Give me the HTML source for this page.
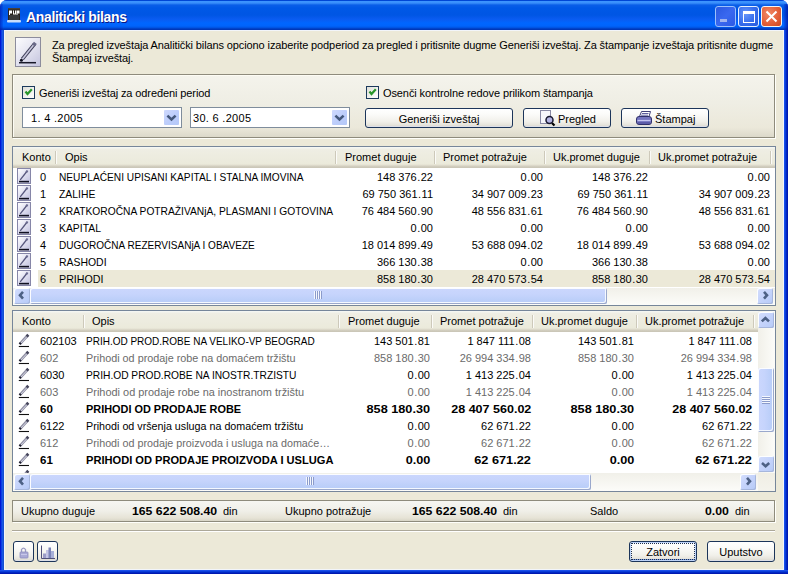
<!DOCTYPE html><html><head><meta charset="utf-8"><style>
*{margin:0;padding:0;box-sizing:border-box}
html,body{width:788px;height:574px;overflow:hidden;background:#fff}
body{font-family:"Liberation Sans",sans-serif;font-size:11px;color:#000;position:relative}
.a{position:absolute}
.t{position:absolute;white-space:nowrap;line-height:13px}
svg{display:block}
.btn{position:absolute;border:1px solid #1c355a;padding-top:1px;border-radius:3px;background:linear-gradient(#ffffff 0%,#fbfbf9 30%,#f1f0ea 70%,#e6e4dc 88%,#d8d5cb 100%);text-align:center;line-height:18px;white-space:nowrap;box-shadow:inset 0 -1px 0 #dcdfe8}
.combo{position:absolute;height:21px;border:1px solid #7f8d9c;background:#fff}
.cbtn{position:absolute;right:2px;top:2px;width:15px;height:15px;border-radius:1px;background:linear-gradient(135deg,#cfd9fd,#bccdfb 55%,#b4c8f8)}
.grid{position:absolute;border:1px solid #76869a;background:#fff;overflow:hidden}
.hdr{position:absolute;left:0;top:0;height:21px;background:linear-gradient(#f4f6f2 0px,#f4f6f2 1px,#efeee4 2px,#ebeadb 17px,#e2dfd0 18px,#d6d2c3 19px,#cbc7b8 20px,#cbc7b8 21px)}
.hs{position:absolute;top:4px;width:2px;height:13px;border-left:1px solid #cdc9ba;border-right:1px solid #fbfbf8}
.c{position:absolute;white-space:nowrap;line-height:13px}
.r{text-align:right}
.g{color:#6b6b6b}
.b{font-weight:bold}
.track{position:absolute;background:linear-gradient(#f1f0e9,#fcfcf9)}
.vtrack{position:absolute;background:linear-gradient(90deg,#f1f0e9,#fcfcf9)}
</style></head><body>
<div class="a" style="left:0;top:0;width:788px;height:574px;border-radius:7px 7px 0 0;overflow:hidden;background:linear-gradient(90deg,#0010d0 0,#0020d8 1px,#1a5ef2 2px,#1650d0 3px,#1650d0 4px,#0831d9 4px)"><div class="a" style="left:0;top:0;width:788px;height:30px;background:linear-gradient(#0046d5 0px,#0046d5 1px,#3d95ff 1px,#3a8ffb 3px,#0a5ee8 5px,#0058e6 8px,#0056e4 15px,#0a5bf0 19px,#0066ff 23px,#0064fc 26px,#0050dd 28px,#0037b8 29px,#0037b8 30px)"></div><div class="a" style="left:784px;top:4px;width:4px;height:26px;background:linear-gradient(90deg,rgba(0,40,200,0.25),rgba(0,30,180,0.55) 2px,rgba(0,20,160,0.8))"></div><div class="a" style="left:0;top:4px;width:3px;height:26px;background:linear-gradient(90deg,rgba(0,20,170,0.6),rgba(0,40,200,0.2))"></div><div class="a" style="left:784px;top:30px;width:4px;height:544px;background:linear-gradient(90deg,#1a50ea 0,#1a50ea 1px,#0a3cd8 1px,#0a3cd8 2px,#0028c4 2px,#0028c4 3px,#0018b0 3px)"></div><div class="a" style="left:0;top:570px;width:788px;height:4px;background:linear-gradient(#1a50ea 0,#1a50ea 1px,#0a3cd8 1px,#0a3cd8 2px,#0028c4 2px,#0028c4 3px,#0018b0 3px)"></div></div>
<div class="a" style="left:4px;top:30px;width:780px;height:540px;background:#ece9d8;box-shadow:inset 0 0 0 1px #f2f5fa"></div>
<svg class="a" style="left:7px;top:8px" width="14" height="15" viewBox="0 0 14 15"><rect x="1" y="0" width="12" height="13" fill="#2a241e"/><rect x="1" y="0" width="12" height="1.5" fill="#4a4038"/><rect x="2" y="7" width="10" height="5" fill="#3a3a3a"/><path d="M2 2.5h3v3h-2v1.5h-1z M6 2.5h1v3h1v-3h1v4h-3z M9.5 2.5h3v3h-2v1.5h-1z" fill="#fff"/><rect x="0" y="12" width="14" height="2.5" rx="1" fill="#c8dcfa"/></svg>
<div class="t" style="left:27px;top:11px;color:#0a1883;font-weight:bold;font-size:14px;line-height:15px;letter-spacing:-0.35px">Analiticki bilans</div>
<div class="t" style="left:26px;top:10px;color:#fff;font-weight:bold;font-size:14px;line-height:15px;letter-spacing:-0.35px">Analiticki bilans</div>
<div class="a" style="left:715px;top:6px;width:21px;height:21px;border:1px solid #9cc0fc;border-radius:3px;background:linear-gradient(135deg,#2a58e0,#3a68f0 50%,#2c5ae4)"><div class="a" style="left:4px;top:12px;width:7px;height:3px;background:#a0b4ee"></div></div>
<div class="a" style="left:738px;top:6px;width:21px;height:21px;border:1px solid #e4f0ff;border-radius:3px;background:radial-gradient(circle at 35% 35%,#6a98fa,#3a70ee 50%,#2458dc)"><div class="a" style="left:4px;top:4px;width:12px;height:12px;border:1px solid #fff;border-top-width:3px"></div></div>
<div class="a" style="left:761px;top:6px;width:21px;height:21px;border:1px solid #f4f4f4;border-radius:3px;background:radial-gradient(circle at 35% 35%,#f08a68,#e4603a 55%,#cc4820)"><svg width="19" height="19" viewBox="0 0 19 19" style="position:absolute;left:0;top:0"><path d="M4.5 4.5 L14.5 14.5 M14.5 4.5 L4.5 14.5" stroke="#fff" stroke-width="2"/></svg></div>
<div class="a" style="left:15px;top:37px;width:26px;height:30px;border:1px solid #8c8c9c;background:linear-gradient(135deg,#fcfcfe,#e6e6f2 45%,#c4c4de)"><svg width="24" height="28" viewBox="0 0 24 28" style="position:absolute;left:0;top:0"><line x1="6.3" y1="21.2" x2="18.6" y2="5.8" stroke="#40405a" stroke-width="3.6"/><line x1="6.3" y1="21.2" x2="18.6" y2="5.8" stroke="#c8c8de" stroke-width="1.6"/><line x1="17.4" y1="7.3" x2="19.4" y2="4.8" stroke="#6a6a88" stroke-width="3.6"/><circle cx="5.4" cy="22.3" r="1.5" fill="#101020"/><line x1="3" y1="24.7" x2="20" y2="24.7" stroke="#181828" stroke-width="1.5"/></svg></div>
<div class="t" style="left:52px;top:39px;letter-spacing:-0.11px">Za pregled izveštaja Analitički bilans opciono izaberite podperiod za pregled i pritisnite dugme Generiši izveštaj. Za štampanje izveštaja pritisnite dugme</div>
<div class="t" style="left:52px;top:52px;letter-spacing:-0.11px">Štampaj izveštaj.</div>
<div class="a" style="left:12px;top:74px;width:763px;height:64px;border:1px solid #8e8b7c;box-shadow:1px 1px 0 #fffffa,inset 1px 1px 0 #fdfcf4;background:linear-gradient(#f4f3ec,#efeee4 45%,#ebe8da 85%,#dcd9ca)"></div>
<div class="a" style="left:22px;top:86px;width:13px;height:13px;border:1px solid #1c3a5c;background:linear-gradient(135deg,#dedfd8,#fafaf8 80%)"><svg width="11" height="11" viewBox="0 0 11 11" style="position:absolute;left:0;top:0"><polyline points="2.5,4.5 4.5,7 8.8,2.3" fill="none" stroke="#28962a" stroke-width="2.2"/></svg></div>
<div class="t" style="left:39px;top:87px;letter-spacing:-0.1px">Generiši izveštaj za određeni period</div>
<div class="a" style="left:366px;top:86px;width:13px;height:13px;border:1px solid #1c3a5c;background:linear-gradient(135deg,#dedfd8,#fafaf8 80%)"><svg width="11" height="11" viewBox="0 0 11 11" style="position:absolute;left:0;top:0"><polyline points="2.5,4.5 4.5,7 8.8,2.3" fill="none" stroke="#28962a" stroke-width="2.2"/></svg></div>
<div class="t" style="left:383px;top:87px;letter-spacing:-0.1px">Osenči kontrolne redove prilikom štampanja</div>
<div class="combo" style="left:22px;top:107px;width:160px"><div class="t" style="left:8px;top:4px;letter-spacing:0.3px">1. 4 .2005</div><div class="cbtn"><svg width="15" height="15" viewBox="0 0 15 15"><polyline points="3.4,5.6 7.5,9.5 11.6,5.6" fill="none" stroke="#44587c" stroke-width="2.5"/></svg></div></div>
<div class="combo" style="left:190px;top:107px;width:160px"><div class="t" style="left:2px;top:4px;letter-spacing:0.3px">30. 6 .2005</div><div class="cbtn"><svg width="15" height="15" viewBox="0 0 15 15"><polyline points="3.4,5.6 7.5,9.5 11.6,5.6" fill="none" stroke="#44587c" stroke-width="2.5"/></svg></div></div>
<div class="btn" style="left:365px;top:108px;width:148px;height:20px">Generiši izveštaj</div>
<div class="btn" style="left:523px;top:108px;width:88px;height:20px"><span style="position:absolute;left:34px;top:1px;line-height:18px">Pregled</span><svg width="20" height="18" viewBox="0 0 20 18" style="position:absolute;left:16px;top:1px"><rect x="0.5" y="0.5" width="10" height="13" fill="#f6f6fc" stroke="#8a8aa6" stroke-width="1"/><line x1="12" y1="13" x2="14.5" y2="15.5" stroke="#000" stroke-width="2.2"/><circle cx="9.5" cy="10" r="3.5" fill="#b4b4e4" stroke="#181830" stroke-width="1.5"/></svg></div>
<div class="btn" style="left:621px;top:108px;width:88px;height:20px"><span style="position:absolute;left:33px;top:1px;line-height:18px">Štampaj</span><svg width="18" height="16" viewBox="0 0 18 16" style="position:absolute;left:14px;top:1px"><path d="M5.5 1.5 L14.5 1.5 L13 6.5 L3.5 6.5 Z" fill="#fff" stroke="#40407a" stroke-width="1"/><line x1="6" y1="3.5" x2="12.5" y2="3.5" stroke="#6060a0" stroke-width="1"/><line x1="5" y1="5.2" x2="12" y2="5.2" stroke="#6060a0" stroke-width="1"/><path d="M0.5 9 Q0.5 6.5 3 6.5 L13 6.5 Q15.5 6.5 15.5 9 L15.5 12 Q15.5 14.5 13 14.5 L3 14.5 Q0.5 14.5 0.5 12 Z" fill="#7474c0" stroke="#30306a" stroke-width="1"/><line x1="1.5" y1="10.5" x2="14.5" y2="10.5" stroke="#c4c4f0" stroke-width="1.2"/><line x1="2" y1="13" x2="14" y2="13" stroke="#4c4c98" stroke-width="1.2"/></svg></div>
<div class="grid" style="left:12px;top:146px;width:764px;height:160px">
<div class="hdr" style="width:762px"></div>
<div class="hs" style="left:42px"></div>
<div class="hs" style="left:322px"></div>
<div class="hs" style="left:421px"></div>
<div class="hs" style="left:531px"></div>
<div class="hs" style="left:636px"></div>
<div class="hs" style="left:757px"></div>
<div class="c" style="left:9px;top:4px">Konto</div>
<div class="c" style="left:52px;top:4px">Opis</div>
<div class="c" style="left:332px;top:4px">Promet duguje</div>
<div class="c" style="left:430px;top:4px">Promet potražuje</div>
<div class="c" style="left:540px;top:4px">Uk.promet duguje</div>
<div class="c" style="left:645px;top:4px">Uk.promet potražuje</div>
<div class="a" style="left:4px;top:21px;width:14px;height:16px;border:1px solid #8686a8;background:linear-gradient(135deg,#ffffff,#e2e2f2 45%,#c0c0de)"><svg width="12" height="14" viewBox="0 0 12 14" style="position:absolute;left:0;top:0"><line x1="2.2" y1="10.8" x2="9.2" y2="2" stroke="#56567c" stroke-width="1.3"/><line x1="8.2" y1="3.3" x2="9.6" y2="1.5" stroke="#6a6a90" stroke-width="2"/><line x1="1" y1="12.6" x2="11" y2="12.6" stroke="#101020" stroke-width="1.6"/></svg></div>
<div class="c" style="left:27px;top:24px">0</div>
<div class="c" style="left:46px;top:24px;transform-origin:0 0;transform:scaleX(0.9243)">NEUPLAĆENI UPISANI KAPITAL I STALNA IMOVINA</div>
<div class="c r" style="right:342px;top:24px">148 376<span style="margin:0 0.5px">.</span>22</div>
<div class="c r" style="right:232px;top:24px">0<span style="margin:0 0.5px">.</span>00</div>
<div class="c r" style="right:127px;top:24px">148 376<span style="margin:0 0.5px">.</span>22</div>
<div class="c r" style="right:5px;top:24px">0<span style="margin:0 0.5px">.</span>00</div>
<div class="a" style="left:4px;top:38px;width:14px;height:16px;border:1px solid #8686a8;background:linear-gradient(135deg,#ffffff,#e2e2f2 45%,#c0c0de)"><svg width="12" height="14" viewBox="0 0 12 14" style="position:absolute;left:0;top:0"><line x1="2.2" y1="10.8" x2="9.2" y2="2" stroke="#56567c" stroke-width="1.3"/><line x1="8.2" y1="3.3" x2="9.6" y2="1.5" stroke="#6a6a90" stroke-width="2"/><line x1="1" y1="12.6" x2="11" y2="12.6" stroke="#101020" stroke-width="1.6"/></svg></div>
<div class="c" style="left:27px;top:41px">1</div>
<div class="c" style="left:46px;top:41px;transform-origin:0 0;transform:scaleX(0.9431)">ZALIHE</div>
<div class="c r" style="right:342px;top:41px">69 750 361<span style="margin:0 0.5px">.</span>11</div>
<div class="c r" style="right:232px;top:41px">34 907 009<span style="margin:0 0.5px">.</span>23</div>
<div class="c r" style="right:127px;top:41px">69 750 361<span style="margin:0 0.5px">.</span>11</div>
<div class="c r" style="right:5px;top:41px">34 907 009<span style="margin:0 0.5px">.</span>23</div>
<div class="a" style="left:4px;top:55px;width:14px;height:16px;border:1px solid #8686a8;background:linear-gradient(135deg,#ffffff,#e2e2f2 45%,#c0c0de)"><svg width="12" height="14" viewBox="0 0 12 14" style="position:absolute;left:0;top:0"><line x1="2.2" y1="10.8" x2="9.2" y2="2" stroke="#56567c" stroke-width="1.3"/><line x1="8.2" y1="3.3" x2="9.6" y2="1.5" stroke="#6a6a90" stroke-width="2"/><line x1="1" y1="12.6" x2="11" y2="12.6" stroke="#101020" stroke-width="1.6"/></svg></div>
<div class="c" style="left:27px;top:58px">2</div>
<div class="c" style="left:46px;top:58px;transform-origin:0 0;transform:scaleX(0.9304)">KRATKOROČNA POTRAŽIVANjA, PLASMANI I GOTOVINA</div>
<div class="c r" style="right:342px;top:58px">76 484 560<span style="margin:0 0.5px">.</span>90</div>
<div class="c r" style="right:232px;top:58px">48 556 831<span style="margin:0 0.5px">.</span>61</div>
<div class="c r" style="right:127px;top:58px">76 484 560<span style="margin:0 0.5px">.</span>90</div>
<div class="c r" style="right:5px;top:58px">48 556 831<span style="margin:0 0.5px">.</span>61</div>
<div class="a" style="left:4px;top:72px;width:14px;height:16px;border:1px solid #8686a8;background:linear-gradient(135deg,#ffffff,#e2e2f2 45%,#c0c0de)"><svg width="12" height="14" viewBox="0 0 12 14" style="position:absolute;left:0;top:0"><line x1="2.2" y1="10.8" x2="9.2" y2="2" stroke="#56567c" stroke-width="1.3"/><line x1="8.2" y1="3.3" x2="9.6" y2="1.5" stroke="#6a6a90" stroke-width="2"/><line x1="1" y1="12.6" x2="11" y2="12.6" stroke="#101020" stroke-width="1.6"/></svg></div>
<div class="c" style="left:27px;top:75px">3</div>
<div class="c" style="left:46px;top:75px;transform-origin:0 0;transform:scaleX(0.9434)">KAPITAL</div>
<div class="c r" style="right:342px;top:75px">0<span style="margin:0 0.5px">.</span>00</div>
<div class="c r" style="right:232px;top:75px">0<span style="margin:0 0.5px">.</span>00</div>
<div class="c r" style="right:127px;top:75px">0<span style="margin:0 0.5px">.</span>00</div>
<div class="c r" style="right:5px;top:75px">0<span style="margin:0 0.5px">.</span>00</div>
<div class="a" style="left:4px;top:89px;width:14px;height:16px;border:1px solid #8686a8;background:linear-gradient(135deg,#ffffff,#e2e2f2 45%,#c0c0de)"><svg width="12" height="14" viewBox="0 0 12 14" style="position:absolute;left:0;top:0"><line x1="2.2" y1="10.8" x2="9.2" y2="2" stroke="#56567c" stroke-width="1.3"/><line x1="8.2" y1="3.3" x2="9.6" y2="1.5" stroke="#6a6a90" stroke-width="2"/><line x1="1" y1="12.6" x2="11" y2="12.6" stroke="#101020" stroke-width="1.6"/></svg></div>
<div class="c" style="left:27px;top:92px">4</div>
<div class="c" style="left:46px;top:92px;transform-origin:0 0;transform:scaleX(0.9113)">DUGOROČNA REZERVISANjA I OBAVEZE</div>
<div class="c r" style="right:342px;top:92px">18 014 899<span style="margin:0 0.5px">.</span>49</div>
<div class="c r" style="right:232px;top:92px">53 688 094<span style="margin:0 0.5px">.</span>02</div>
<div class="c r" style="right:127px;top:92px">18 014 899<span style="margin:0 0.5px">.</span>49</div>
<div class="c r" style="right:5px;top:92px">53 688 094<span style="margin:0 0.5px">.</span>02</div>
<div class="a" style="left:4px;top:106px;width:14px;height:16px;border:1px solid #8686a8;background:linear-gradient(135deg,#ffffff,#e2e2f2 45%,#c0c0de)"><svg width="12" height="14" viewBox="0 0 12 14" style="position:absolute;left:0;top:0"><line x1="2.2" y1="10.8" x2="9.2" y2="2" stroke="#56567c" stroke-width="1.3"/><line x1="8.2" y1="3.3" x2="9.6" y2="1.5" stroke="#6a6a90" stroke-width="2"/><line x1="1" y1="12.6" x2="11" y2="12.6" stroke="#101020" stroke-width="1.6"/></svg></div>
<div class="c" style="left:27px;top:109px">5</div>
<div class="c" style="left:46px;top:109px;transform-origin:0 0;transform:scaleX(0.9488)">RASHODI</div>
<div class="c r" style="right:342px;top:109px">366 130<span style="margin:0 0.5px">.</span>38</div>
<div class="c r" style="right:232px;top:109px">0<span style="margin:0 0.5px">.</span>00</div>
<div class="c r" style="right:127px;top:109px">366 130<span style="margin:0 0.5px">.</span>38</div>
<div class="c r" style="right:5px;top:109px">0<span style="margin:0 0.5px">.</span>00</div>
<div class="a" style="left:25px;top:123px;width:737px;height:17px;background:#ece9d8"></div>
<div class="a" style="left:4px;top:123px;width:14px;height:16px;border:1px solid #8686a8;background:linear-gradient(135deg,#ffffff,#e2e2f2 45%,#c0c0de)"><svg width="12" height="14" viewBox="0 0 12 14" style="position:absolute;left:0;top:0"><line x1="2.2" y1="10.8" x2="9.2" y2="2" stroke="#56567c" stroke-width="1.3"/><line x1="8.2" y1="3.3" x2="9.6" y2="1.5" stroke="#6a6a90" stroke-width="2"/><line x1="1" y1="12.6" x2="11" y2="12.6" stroke="#101020" stroke-width="1.6"/></svg></div>
<div class="c" style="left:27px;top:126px">6</div>
<div class="c" style="left:46px;top:126px;transform-origin:0 0;transform:scaleX(0.9720)">PRIHODI</div>
<div class="c r" style="right:342px;top:126px">858 180<span style="margin:0 0.5px">.</span>30</div>
<div class="c r" style="right:232px;top:126px">28 470 573<span style="margin:0 0.5px">.</span>54</div>
<div class="c r" style="right:127px;top:126px">858 180<span style="margin:0 0.5px">.</span>30</div>
<div class="c r" style="right:5px;top:126px">28 470 573<span style="margin:0 0.5px">.</span>54</div>
<div class="track" style="left:0;top:141px;width:762px;height:17px"></div>
<div class="a" style="left:1px;top:141px;width:16px;height:16px;border-radius:2px;background:linear-gradient(135deg,#d4defd 0%,#c6d4fb 45%,#b6caf7 100%);box-shadow:inset 1px 1px 0 #fdfeff,inset -1px -1px 0 #a6b6dc"><svg width="16" height="16" viewBox="0 0 16 16" style="position:absolute;left:0;top:0"><polyline points="9,3.8 6,7.2 9,10.6" fill="none" stroke="#4d6185" stroke-width="2.6" stroke-linecap="butt"/></svg></div>
<div class="a" style="left:17px;top:141px;width:577px;height:16px;border-radius:2px;background:linear-gradient(#cbd7fd,#c6d4fc 40%,#bccff9 75%,#b6cdf8);box-shadow:inset 1px 1px 0 #fbfcff,inset -1px -1px 0 #9aa8cc,inset -2px -2px 0 #f4f8ff"></div><div class="a" style="left:301px;top:144px;width:2px;height:8px;border-left:1px solid #f4f7fe;border-right:1px solid #8b9bcb"></div><div class="a" style="left:303px;top:144px;width:2px;height:8px;border-left:1px solid #f4f7fe;border-right:1px solid #8b9bcb"></div><div class="a" style="left:305px;top:144px;width:2px;height:8px;border-left:1px solid #f4f7fe;border-right:1px solid #8b9bcb"></div><div class="a" style="left:307px;top:144px;width:2px;height:8px;border-left:1px solid #f4f7fe;border-right:1px solid #8b9bcb"></div>
<div class="a" style="left:744px;top:141px;width:16px;height:16px;border-radius:2px;background:linear-gradient(135deg,#d4defd 0%,#c6d4fb 45%,#b6caf7 100%);box-shadow:inset 1px 1px 0 #fdfeff,inset -1px -1px 0 #a6b6dc"><svg width="16" height="16" viewBox="0 0 16 16" style="position:absolute;left:0;top:0"><polyline points="7,3.8 10,7.2 7,10.6" fill="none" stroke="#4d6185" stroke-width="2.6" stroke-linecap="butt"/></svg></div>
</div>
<div class="grid" style="left:12px;top:310px;width:764px;height:182px">
<div class="hdr" style="width:745px"></div>
<div class="hs" style="left:70px"></div>
<div class="hs" style="left:325px"></div>
<div class="hs" style="left:418px"></div>
<div class="hs" style="left:519px"></div>
<div class="hs" style="left:623px"></div>
<div class="hs" style="left:740px"></div>
<div class="c" style="left:9px;top:4px">Konto</div>
<div class="c" style="left:79px;top:4px">Opis</div>
<div class="c" style="left:335px;top:4px">Promet duguje</div>
<div class="c" style="left:427px;top:4px">Promet potražuje</div>
<div class="c" style="left:528px;top:4px">Uk.promet duguje</div>
<div class="c" style="left:632px;top:4px">Uk.promet potražuje</div>
<svg class="a" style="left:5px;top:22px" width="12" height="15" viewBox="0 0 12 15"><line x1="2.4" y1="10.4" x2="9.4" y2="2.8" stroke="#8e8ea2" stroke-width="2.8"/><line x1="2.9" y1="10.1" x2="9.0" y2="3.5" stroke="#d4d4e2" stroke-width="1"/><line x1="8.7" y1="3.5" x2="10.3" y2="1.8" stroke="#44445a" stroke-width="2.8"/><line x1="1.6" y1="11.2" x2="2.8" y2="9.9" stroke="#202030" stroke-width="2.4"/><line x1="0.8" y1="13.5" x2="11" y2="13.5" stroke="#101010" stroke-width="1.1"/></svg>
<div class="c" style="left:27px;top:24px;transform-origin:0 0">602103</div>
<div class="c" style="left:73px;top:24px;transform-origin:0 0;transform:scaleX(0.9085)">PRIH.OD PROD.ROBE NA VELIKO-VP BEOGRAD</div>
<div class="c r" style="right:345px;top:24px;transform-origin:100% 0">143 501<span style="margin:0 0.5px">.</span>81</div>
<div class="c r" style="right:244px;top:24px;transform-origin:100% 0">1 847 111<span style="margin:0 0.5px">.</span>08</div>
<div class="c r" style="right:141px;top:24px;transform-origin:100% 0">143 501<span style="margin:0 0.5px">.</span>81</div>
<div class="c r" style="right:23px;top:24px;transform-origin:100% 0">1 847 111<span style="margin:0 0.5px">.</span>08</div>
<svg class="a" style="left:5px;top:39px" width="12" height="15" viewBox="0 0 12 15"><line x1="2.4" y1="10.4" x2="9.4" y2="2.8" stroke="#8e8ea2" stroke-width="2.8"/><line x1="2.9" y1="10.1" x2="9.0" y2="3.5" stroke="#d4d4e2" stroke-width="1"/><line x1="8.7" y1="3.5" x2="10.3" y2="1.8" stroke="#44445a" stroke-width="2.8"/><line x1="1.6" y1="11.2" x2="2.8" y2="9.9" stroke="#202030" stroke-width="2.4"/><line x1="0.8" y1="13.5" x2="11" y2="13.5" stroke="#101010" stroke-width="1.1"/></svg>
<div class="c g" style="left:27px;top:41px;transform-origin:0 0">602</div>
<div class="c g" style="left:73px;top:41px;transform-origin:0 0;transform:scaleX(0.9818)">Prihodi od prodaje robe na domaćem tržištu</div>
<div class="c r g" style="right:345px;top:41px;transform-origin:100% 0">858 180<span style="margin:0 0.5px">.</span>30</div>
<div class="c r g" style="right:244px;top:41px;transform-origin:100% 0">26 994 334<span style="margin:0 0.5px">.</span>98</div>
<div class="c r g" style="right:141px;top:41px;transform-origin:100% 0">858 180<span style="margin:0 0.5px">.</span>30</div>
<div class="c r g" style="right:23px;top:41px;transform-origin:100% 0">26 994 334<span style="margin:0 0.5px">.</span>98</div>
<svg class="a" style="left:5px;top:56px" width="12" height="15" viewBox="0 0 12 15"><line x1="2.4" y1="10.4" x2="9.4" y2="2.8" stroke="#8e8ea2" stroke-width="2.8"/><line x1="2.9" y1="10.1" x2="9.0" y2="3.5" stroke="#d4d4e2" stroke-width="1"/><line x1="8.7" y1="3.5" x2="10.3" y2="1.8" stroke="#44445a" stroke-width="2.8"/><line x1="1.6" y1="11.2" x2="2.8" y2="9.9" stroke="#202030" stroke-width="2.4"/><line x1="0.8" y1="13.5" x2="11" y2="13.5" stroke="#101010" stroke-width="1.1"/></svg>
<div class="c" style="left:27px;top:58px;transform-origin:0 0">6030</div>
<div class="c" style="left:73px;top:58px;transform-origin:0 0;transform:scaleX(0.9279)">PRIH.OD PROD.ROBE NA INOSTR.TRZISTU</div>
<div class="c r" style="right:345px;top:58px;transform-origin:100% 0">0<span style="margin:0 0.5px">.</span>00</div>
<div class="c r" style="right:244px;top:58px;transform-origin:100% 0">1 413 225<span style="margin:0 0.5px">.</span>04</div>
<div class="c r" style="right:141px;top:58px;transform-origin:100% 0">0<span style="margin:0 0.5px">.</span>00</div>
<div class="c r" style="right:23px;top:58px;transform-origin:100% 0">1 413 225<span style="margin:0 0.5px">.</span>04</div>
<svg class="a" style="left:5px;top:73px" width="12" height="15" viewBox="0 0 12 15"><line x1="2.4" y1="10.4" x2="9.4" y2="2.8" stroke="#8e8ea2" stroke-width="2.8"/><line x1="2.9" y1="10.1" x2="9.0" y2="3.5" stroke="#d4d4e2" stroke-width="1"/><line x1="8.7" y1="3.5" x2="10.3" y2="1.8" stroke="#44445a" stroke-width="2.8"/><line x1="1.6" y1="11.2" x2="2.8" y2="9.9" stroke="#202030" stroke-width="2.4"/><line x1="0.8" y1="13.5" x2="11" y2="13.5" stroke="#101010" stroke-width="1.1"/></svg>
<div class="c g" style="left:27px;top:75px;transform-origin:0 0">603</div>
<div class="c g" style="left:73px;top:75px;transform-origin:0 0;transform:scaleX(0.9936)">Prihodi od prodaje robe na inostranom tržištu</div>
<div class="c r g" style="right:345px;top:75px;transform-origin:100% 0">0<span style="margin:0 0.5px">.</span>00</div>
<div class="c r g" style="right:244px;top:75px;transform-origin:100% 0">1 413 225<span style="margin:0 0.5px">.</span>04</div>
<div class="c r g" style="right:141px;top:75px;transform-origin:100% 0">0<span style="margin:0 0.5px">.</span>00</div>
<div class="c r g" style="right:23px;top:75px;transform-origin:100% 0">1 413 225<span style="margin:0 0.5px">.</span>04</div>
<svg class="a" style="left:5px;top:90px" width="12" height="15" viewBox="0 0 12 15"><line x1="2.4" y1="10.4" x2="9.4" y2="2.8" stroke="#8e8ea2" stroke-width="2.8"/><line x1="2.9" y1="10.1" x2="9.0" y2="3.5" stroke="#d4d4e2" stroke-width="1"/><line x1="8.7" y1="3.5" x2="10.3" y2="1.8" stroke="#44445a" stroke-width="2.8"/><line x1="1.6" y1="11.2" x2="2.8" y2="9.9" stroke="#202030" stroke-width="2.4"/><line x1="0.8" y1="13.5" x2="11" y2="13.5" stroke="#101010" stroke-width="1.1"/></svg>
<div class="c b" style="left:27px;top:92px;transform-origin:0 0;transform:scaleX(1.0481)">60</div>
<div class="c b" style="left:73px;top:92px;transform-origin:0 0;transform:scaleX(0.9915)">PRIHODI OD PRODAJE ROBE</div>
<div class="c r b" style="right:345px;top:92px;transform-origin:100% 0;transform:scaleX(1.1541)">858 180.30</div>
<div class="c r b" style="right:244px;top:92px;transform-origin:100% 0;transform:scaleX(1.1392)">28 407 560.02</div>
<div class="c r b" style="right:141px;top:92px;transform-origin:100% 0;transform:scaleX(1.1541)">858 180.30</div>
<div class="c r b" style="right:23px;top:92px;transform-origin:100% 0;transform:scaleX(1.1392)">28 407 560.02</div>
<svg class="a" style="left:5px;top:107px" width="12" height="15" viewBox="0 0 12 15"><line x1="2.4" y1="10.4" x2="9.4" y2="2.8" stroke="#8e8ea2" stroke-width="2.8"/><line x1="2.9" y1="10.1" x2="9.0" y2="3.5" stroke="#d4d4e2" stroke-width="1"/><line x1="8.7" y1="3.5" x2="10.3" y2="1.8" stroke="#44445a" stroke-width="2.8"/><line x1="1.6" y1="11.2" x2="2.8" y2="9.9" stroke="#202030" stroke-width="2.4"/><line x1="0.8" y1="13.5" x2="11" y2="13.5" stroke="#101010" stroke-width="1.1"/></svg>
<div class="c" style="left:27px;top:109px;transform-origin:0 0">6122</div>
<div class="c" style="left:73px;top:109px;transform-origin:0 0;transform:scaleX(0.9755)">Prihodi od vršenja usluga na domaćem tržištu</div>
<div class="c r" style="right:345px;top:109px;transform-origin:100% 0">0<span style="margin:0 0.5px">.</span>00</div>
<div class="c r" style="right:244px;top:109px;transform-origin:100% 0">62 671<span style="margin:0 0.5px">.</span>22</div>
<div class="c r" style="right:141px;top:109px;transform-origin:100% 0">0<span style="margin:0 0.5px">.</span>00</div>
<div class="c r" style="right:23px;top:109px;transform-origin:100% 0">62 671<span style="margin:0 0.5px">.</span>22</div>
<svg class="a" style="left:5px;top:124px" width="12" height="15" viewBox="0 0 12 15"><line x1="2.4" y1="10.4" x2="9.4" y2="2.8" stroke="#8e8ea2" stroke-width="2.8"/><line x1="2.9" y1="10.1" x2="9.0" y2="3.5" stroke="#d4d4e2" stroke-width="1"/><line x1="8.7" y1="3.5" x2="10.3" y2="1.8" stroke="#44445a" stroke-width="2.8"/><line x1="1.6" y1="11.2" x2="2.8" y2="9.9" stroke="#202030" stroke-width="2.4"/><line x1="0.8" y1="13.5" x2="11" y2="13.5" stroke="#101010" stroke-width="1.1"/></svg>
<div class="c g" style="left:27px;top:126px;transform-origin:0 0">612</div>
<div class="c g" style="left:73px;top:126px;transform-origin:0 0;transform:scaleX(0.9779)">Prihodi od prodaje proizvoda i usluga na domaće…</div>
<div class="c r g" style="right:345px;top:126px;transform-origin:100% 0">0<span style="margin:0 0.5px">.</span>00</div>
<div class="c r g" style="right:244px;top:126px;transform-origin:100% 0">62 671<span style="margin:0 0.5px">.</span>22</div>
<div class="c r g" style="right:141px;top:126px;transform-origin:100% 0">0<span style="margin:0 0.5px">.</span>00</div>
<div class="c r g" style="right:23px;top:126px;transform-origin:100% 0">62 671<span style="margin:0 0.5px">.</span>22</div>
<svg class="a" style="left:5px;top:141px" width="12" height="15" viewBox="0 0 12 15"><line x1="2.4" y1="10.4" x2="9.4" y2="2.8" stroke="#8e8ea2" stroke-width="2.8"/><line x1="2.9" y1="10.1" x2="9.0" y2="3.5" stroke="#d4d4e2" stroke-width="1"/><line x1="8.7" y1="3.5" x2="10.3" y2="1.8" stroke="#44445a" stroke-width="2.8"/><line x1="1.6" y1="11.2" x2="2.8" y2="9.9" stroke="#202030" stroke-width="2.4"/><line x1="0.8" y1="13.5" x2="11" y2="13.5" stroke="#101010" stroke-width="1.1"/></svg>
<div class="c b" style="left:27px;top:143px;transform-origin:0 0;transform:scaleX(1.0481)">61</div>
<div class="c b" style="left:73px;top:143px;transform-origin:0 0;transform:scaleX(1.0088)">PRIHODI OD PRODAJE PROIZVODA I USLUGA</div>
<div class="c r b" style="right:345px;top:143px;transform-origin:100% 0;transform:scaleX(1.1507)">0.00</div>
<div class="c r b" style="right:244px;top:143px;transform-origin:100% 0;transform:scaleX(1.1594)">62 671.22</div>
<div class="c r b" style="right:141px;top:143px;transform-origin:100% 0;transform:scaleX(1.1507)">0.00</div>
<div class="c r b" style="right:23px;top:143px;transform-origin:100% 0;transform:scaleX(1.1594)">62 671.22</div>
<svg class="a" style="left:5px;top:158px" width="12" height="15" viewBox="0 0 12 15"><line x1="2.4" y1="10.4" x2="9.4" y2="2.8" stroke="#8e8ea2" stroke-width="2.8"/><line x1="2.9" y1="10.1" x2="9.0" y2="3.5" stroke="#d4d4e2" stroke-width="1"/><line x1="8.7" y1="3.5" x2="10.3" y2="1.8" stroke="#44445a" stroke-width="2.8"/><line x1="1.6" y1="11.2" x2="2.8" y2="9.9" stroke="#202030" stroke-width="2.4"/><line x1="0.8" y1="13.5" x2="11" y2="13.5" stroke="#101010" stroke-width="1.1"/></svg>
<div class="c g" style="left:27px;top:160px;transform-origin:0 0">6123</div>
<div class="c g" style="left:73px;top:160px;transform-origin:0 0;transform:scaleX(0.97)">Prihodi od prodaje proizvoda i usluga na domaćem</div>
<div class="c r g" style="right:345px;top:160px;transform-origin:100% 0">0<span style="margin:0 0.5px">.</span>00</div>
<div class="c r g" style="right:244px;top:160px;transform-origin:100% 0">62 671<span style="margin:0 0.5px">.</span>22</div>
<div class="c r g" style="right:141px;top:160px;transform-origin:100% 0">0<span style="margin:0 0.5px">.</span>00</div>
<div class="c r g" style="right:23px;top:160px;transform-origin:100% 0">62 671<span style="margin:0 0.5px">.</span>22</div>
<div class="vtrack" style="left:745px;top:0;width:17px;height:162px"></div>
<div class="a" style="left:745px;top:1px;width:16px;height:16px;border-radius:2px;background:linear-gradient(135deg,#d4defd 0%,#c6d4fb 45%,#b6caf7 100%);box-shadow:inset 1px 1px 0 #fdfeff,inset -1px -1px 0 #a6b6dc"><svg width="16" height="16" viewBox="0 0 16 16" style="position:absolute;left:0;top:0"><polyline points="3.8,9.4 7.4,6 11,9.4" fill="none" stroke="#4d6185" stroke-width="2.6" stroke-linecap="butt"/></svg></div>
<div class="a" style="left:745px;top:57px;width:16px;height:64px;border-radius:2px;background:linear-gradient(90deg,#cbd7fd,#c6d4fc 40%,#bccff9 75%,#b6cdf8);box-shadow:inset 1px 1px 0 #fbfcff,inset -1px -1px 0 #9aa8cc,inset -2px -2px 0 #f4f8ff"></div><div class="a" style="left:749px;top:85px;width:8px;height:2px;border-top:1px solid #f4f7fe;border-bottom:1px solid #8b9bcb"></div><div class="a" style="left:749px;top:87px;width:8px;height:2px;border-top:1px solid #f4f7fe;border-bottom:1px solid #8b9bcb"></div><div class="a" style="left:749px;top:89px;width:8px;height:2px;border-top:1px solid #f4f7fe;border-bottom:1px solid #8b9bcb"></div><div class="a" style="left:749px;top:91px;width:8px;height:2px;border-top:1px solid #f4f7fe;border-bottom:1px solid #8b9bcb"></div>
<div class="a" style="left:745px;top:145px;width:16px;height:16px;border-radius:2px;background:linear-gradient(135deg,#d4defd 0%,#c6d4fb 45%,#b6caf7 100%);box-shadow:inset 1px 1px 0 #fdfeff,inset -1px -1px 0 #a6b6dc"><svg width="16" height="16" viewBox="0 0 16 16" style="position:absolute;left:0;top:0"><polyline points="4,7 7.6,10.2 11.2,7" fill="none" stroke="#4d6185" stroke-width="2.6" stroke-linecap="butt"/></svg></div>
<div class="track" style="left:0;top:162px;width:745px;height:18px"></div>
<div class="a" style="left:1px;top:163px;width:16px;height:16px;border-radius:2px;background:linear-gradient(135deg,#d4defd 0%,#c6d4fb 45%,#b6caf7 100%);box-shadow:inset 1px 1px 0 #fdfeff,inset -1px -1px 0 #a6b6dc"><svg width="16" height="16" viewBox="0 0 16 16" style="position:absolute;left:0;top:0"><polyline points="9,3.8 6,7.2 9,10.6" fill="none" stroke="#4d6185" stroke-width="2.6" stroke-linecap="butt"/></svg></div>
<div class="a" style="left:17px;top:163px;width:561px;height:16px;border-radius:2px;background:linear-gradient(#cbd7fd,#c6d4fc 40%,#bccff9 75%,#b6cdf8);box-shadow:inset 1px 1px 0 #fbfcff,inset -1px -1px 0 #9aa8cc,inset -2px -2px 0 #f4f8ff"></div><div class="a" style="left:293px;top:166px;width:2px;height:8px;border-left:1px solid #f4f7fe;border-right:1px solid #8b9bcb"></div><div class="a" style="left:295px;top:166px;width:2px;height:8px;border-left:1px solid #f4f7fe;border-right:1px solid #8b9bcb"></div><div class="a" style="left:297px;top:166px;width:2px;height:8px;border-left:1px solid #f4f7fe;border-right:1px solid #8b9bcb"></div><div class="a" style="left:299px;top:166px;width:2px;height:8px;border-left:1px solid #f4f7fe;border-right:1px solid #8b9bcb"></div>
<div class="a" style="left:727px;top:163px;width:16px;height:16px;border-radius:2px;background:linear-gradient(135deg,#d4defd 0%,#c6d4fb 45%,#b6caf7 100%);box-shadow:inset 1px 1px 0 #fdfeff,inset -1px -1px 0 #a6b6dc"><svg width="16" height="16" viewBox="0 0 16 16" style="position:absolute;left:0;top:0"><polyline points="7,3.8 10,7.2 7,10.6" fill="none" stroke="#4d6185" stroke-width="2.6" stroke-linecap="butt"/></svg></div>
<div class="a" style="left:745px;top:162px;width:17px;height:18px;background:linear-gradient(#f0eee4,#f4f3ec)"></div>
</div>
<div class="a" style="left:12px;top:500px;width:763px;height:22px;border:1px solid #8e8b7c;box-shadow:1px 1px 0 #fffffa;background:linear-gradient(#f6f6f2,#f0efe8 50%,#e6e3d6 85%,#d8d5c6)"></div>
<div class="t" style="left:21px;top:505px">Ukupno duguje</div>
<div class="t b" style="left:132px;top:505px;transform-origin:0 0;transform:scaleX(1.1134)">165 622 508.40</div>
<div class="t" style="left:223px;top:505px">din</div>
<div class="t" style="left:285px;top:505px">Ukupno potražuje</div>
<div class="t b" style="left:412px;top:505px;transform-origin:0 0;transform:scaleX(1.1134)">165 622 508.40</div>
<div class="t" style="left:503px;top:505px">din</div>
<div class="t" style="left:590px;top:505px">Saldo</div>
<div class="t b" style="left:705px;top:505px;transform-origin:0 0;transform:scaleX(1.1178)">0.00</div>
<div class="t" style="left:735px;top:505px">din</div>
<div class="a" style="left:12px;top:530px;width:763px;height:2px;border-top:1px solid #aca899;border-bottom:1px solid #fff"></div>
<div class="btn" style="left:13px;top:541px;width:21px;height:21px"><svg width="19" height="19" viewBox="0 0 19 19" style="position:absolute;left:0;top:0"><path d="M7.5 10 L7.5 7.5 Q9.5 4.6 11.5 7.5 L11.5 10" fill="none" stroke="#9a9ac4" stroke-width="1.3"/><rect x="6" y="10" width="8" height="6" rx="0.8" fill="#aaaad6" stroke="#8c8cbc" stroke-width="0.8"/><line x1="7" y1="12.5" x2="13" y2="12.5" stroke="#c8c8ea" stroke-width="1"/></svg></div>
<div class="btn" style="left:37px;top:541px;width:21px;height:21px"><svg width="19" height="19" viewBox="0 0 19 19" style="position:absolute;left:0;top:0"><rect x="5" y="11.5" width="3" height="4.5" fill="#9c9cc8"/><rect x="8" y="8" width="3" height="8" fill="#c4c4e4"/><rect x="10.5" y="5.5" width="2.5" height="10.5" fill="#7c84b8"/><rect x="13" y="9" width="3" height="7" fill="#a8b0d8"/><path d="M3.5 3.5 L3.5 16.5 L17 16.5" fill="none" stroke="#50507a" stroke-width="1"/></svg></div>
<div class="btn" style="left:629px;top:541px;width:68px;height:21px;line-height:19px;box-shadow:inset 0 0 0 1px #bcd2f8,inset 0 -2px 0 #7c9ce0"><div class="a" style="left:1px;top:1px;width:64px;height:17px;border:1px dotted #1c3050"></div>Zatvori</div>
<div class="btn" style="left:707px;top:541px;width:68px;height:21px;line-height:19px">Uputstvo</div>
</body></html>
